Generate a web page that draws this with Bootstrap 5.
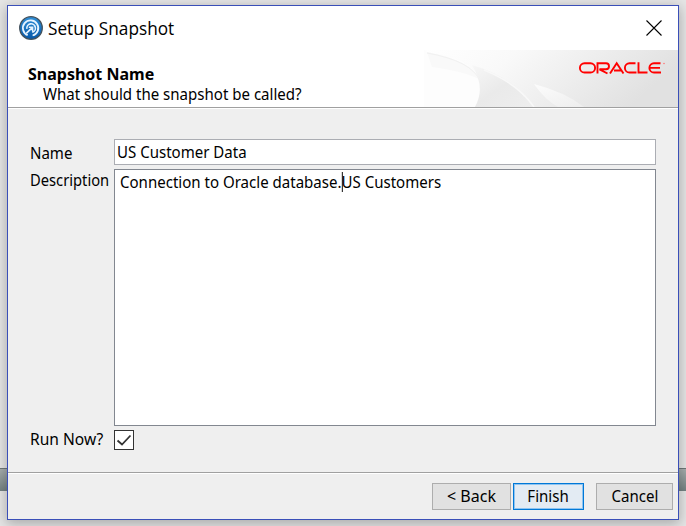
<!DOCTYPE html>
<html lang="en">
<head>
<meta charset="utf-8">
<meta name="viewport" content="width=device-width, initial-scale=1">
<title>Setup Snapshot</title>
<link href="https://cdn.jsdelivr.net/npm/bootstrap@5.3.0/dist/css/bootstrap.min.css" rel="stylesheet">
<style>
html,body{height:526px;overflow:hidden}
body{font-family:"Noto Sans","Open Sans",sans-serif;font-size:16px;line-height:20px;color:#000;background:linear-gradient(#e6e6e6 0 468px,#6e7777 468px 469px,#a7aeae 469px,#748282 491px,#e6e6e6 491px)}
.page{height:526px;padding:5px 7px 6px}
.dialog{width:672px;height:515px;border:1px solid #3a4fb8;background:#efefef;box-shadow:0 3px 12px 1px rgba(0,0,0,.26)}
.titlebar{height:44px;padding:0 16px 0 11px;background:#fff}
.caption{font-family:"Open Sans","Noto Sans",sans-serif;font-size:18px;line-height:24px;margin-left:5px}
.banner{height:58px;background:#fff;border-bottom:1px solid #a0a0a0;box-shadow:0 1px #fff}
.banner-text{padding:14px 0 0 20px;white-space:nowrap}
.banner-art{width:254px;height:57px;flex:none}
.fields{height:364px;padding:31px 22px 0;display:grid;grid-template-columns:84px 542px;grid-template-rows:26px 4px 257px 4px 20px}
.inp{border:1px solid #abadb3;background:#fff;padding:2px;white-space:pre}
.area{grid-row:3;border:1px solid #828790;background:#fff;padding:2px 5px;white-space:pre}
.caret{display:inline-block;width:1px;height:20px;background:#000;margin-right:-1px;vertical-align:top}
.lbl-name{padding-top:4px}
.lbl-desc{grid-row:3;padding-top:1px}
.lbl-run{grid-row:5;margin-top:-1px}
.check{grid-row:5;width:20px;height:20px;border:1px solid #333;background:#fff}
.actions{height:48px;border-top:1px solid #a0a0a0;box-shadow:inset 0 1px #fff;padding:10px 5px 0 0}
.wbtn{height:27px;padding:0;border:1px solid #adadad;border-radius:0;background:#e1e1e1;color:#000;font-size:16px;line-height:23px}
.primary-act{border-color:#0078d7;background:#e3ebf3;box-shadow:inset 0 0 0 1px #8fc4f0}
.t{display:inline-block;white-space:pre;transform:scaleX(.94);transform-origin:0 50%}
.t-title{transform:scaleX(.957)}
.t-bold{transform:none}
.t-desc{transform:scaleX(.92)}
.t-run{transform:scaleX(.973)}
.wbtn .t{transform-origin:50% 50%}
.wbtn .t-full{transform:none}
.w-back{width:79px}
.w-finish{width:71px;margin:0 12px 0 2px}
.w-cancel{width:77px}
</style>
</head>
<body>
<div class="page">
<main class="dialog">
<header class="titlebar d-flex align-items-center">
<svg width="24" height="24" viewBox="0 0 24 24" aria-hidden="true"><defs><linearGradient id="orb" x2="0" y2="1"><stop stop-color="#2f8fd8"/><stop offset="1" stop-color="#0758a8"/></linearGradient></defs><circle cx="12" cy="12" r="11.3" fill="url(#orb)" stroke="#45525c" stroke-width="1.3"/><path d="M8.700 19.200A7.700 7.700 0 1 1 13.600 19.500" fill="none" stroke="#e6f3ff" stroke-width="1.8"/><path d="M7.200 17.300L13.200 11.600M9.800 11.300H13.600V15.200M7.900 12.800A4.300 4.300 0 1 1 13.200 16.300" fill="none" stroke="#e6f3ff" stroke-width="1.6"/></svg>
<span class="caption"><span class="t t-title">Setup Snapshot</span></span>
<svg class="ms-auto" width="16" height="16" viewBox="0 0 16 16"><path d="M.5.5l15 15M15.5.5l-15 15" stroke="#000" stroke-width="1.1"/></svg>
</header>
<section class="banner d-flex justify-content-between">
<div class="banner-text"><div class="fw-bold"><span class="t t-bold">Snapshot Name</span></div><div class="ms-3" ><span class="t" style="margin-left:-1px">What should the snapshot be called?</span></div></div>
<svg class="banner-art" viewBox="424 50 254 57"><defs><linearGradient id="bg" y2=".25"><stop stop-color="#fff"/><stop offset=".35" stop-color="#f9f9f9"/><stop offset=".6" stop-color="#f0f0f0"/><stop offset="1" stop-color="#e1e1e1"/></linearGradient><linearGradient id="fan" x2="1" y2="1"><stop stop-color="#f7f7f7"/><stop offset=".5" stop-color="#eaeaea"/><stop offset="1" stop-color="#eee"/></linearGradient><linearGradient id="beam" x2=".8" y2="1"><stop stop-color="#fcfcfc"/><stop offset="1" stop-color="#efefef"/></linearGradient></defs><path d="M424 50H678V107H424z" fill="url(#bg)"/><path d="M427 52Q472 58 480 80Q482 93 475 107H424V50z" fill="#fdfdfd"/><path d="M427 52Q473 61 480 80Q468 72 432 67z" fill="#f9f9f9"/><path d="M427 53Q472 61 480 81" fill="none" stroke="#f1f1f1"/><path d="M472 65Q515 78 534 107H475Q486 88 472 65z" fill="url(#fan)"/><path d="M484 70Q517 83 534 107" fill="none" stroke="#f8f8f8" stroke-width="1.500"/><path d="M534 84Q565 92 584 107H558Q545 100 534 84z" fill="url(#beam)"/><g fill="none" stroke="#f00" stroke-width="1.9"><path d="M584.500 63.300h6a4.600 4.600 0 0 1 0 9.200h-6a4.600 4.600 0 0 1 0-9.200zM597.500 73.500V63.300h8.500a2.900 2.900 0 0 1 0 6h-6.500l8 4.200M610 73.500L616.700 63.200L623.500 73.500M614 70.500h7M635.500 63.300h-6a4.600 4.600 0 0 0 0 9.200h7M638.500 62.300v10.200h9M660.500 63.300h-6.500a4.600 4.600 0 0 0 0 9.200h7M650 67.900h10"/></g><circle cx="664" cy="63.500" r=".8" fill="#f77"/></svg>
</section>
<section class="fields">
<label class="lbl-name"><span class="t">Name</span></label><div class="inp"><span class="t">US Customer Data</span></div>
<label class="lbl-desc"><span class="t t-desc">Description</span></label><div class="area"><span class="t">Connection to Oracle database.<i class="caret"></i>US Customers</span></div>
<label class="lbl-run"><span class="t t-run">Run Now?</span></label><span class="check"><svg width="18" height="18" viewBox="0 0 18 18" class="d-block"><path d="M2.500 9.500L7 13.500L15.500 4.500" fill="none" stroke="#333" stroke-width="1.8"/></svg></span>
</section>
<footer class="actions d-flex justify-content-end">
<button class="btn wbtn w-back"><span class="t t-full">&lt; Back</span></button>
<button class="btn wbtn primary-act w-finish"><span class="t">Finish</span></button>
<button class="btn wbtn w-cancel"><span class="t">Cancel</span></button>
</footer>
</main>
</div>
<script src="https://cdn.jsdelivr.net/npm/bootstrap@5.3.0/dist/js/bootstrap.bundle.min.js"></script>
</body>
</html>
